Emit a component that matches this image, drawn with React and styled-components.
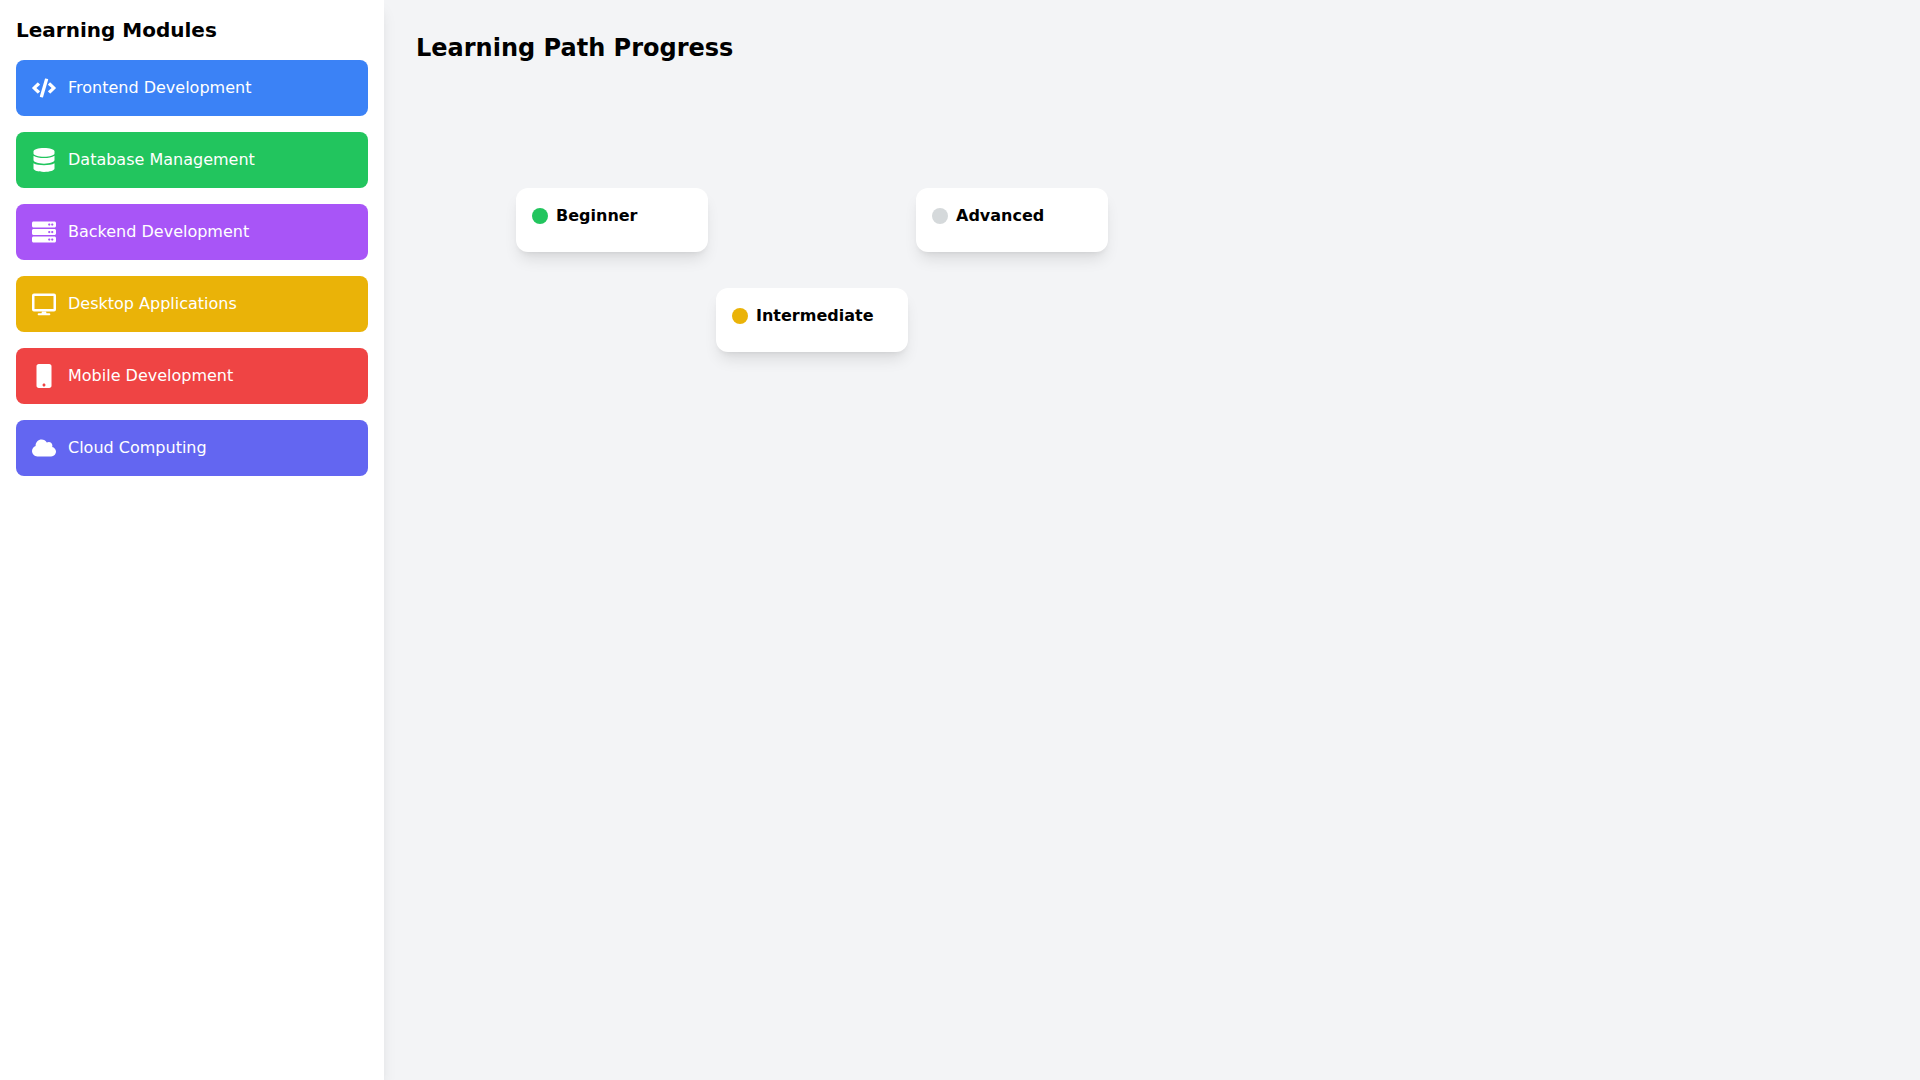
import React from "react";
import styled, { createGlobalStyle } from "styled-components";
import { FaCode, FaServer, FaMobile, FaCloud } from "react-icons/fa";

const Global = createGlobalStyle`
  html, body { margin: 0; padding: 0; height: 100%; }
  * { box-sizing: border-box; }
  body { font-family: "DejaVu Sans", sans-serif; }
`;

const Page = styled.div`
  display: flex;
  height: 100vh;
  overflow: hidden;
  background: #f3f4f6;
`;

const Sidebar = styled.aside`
  width: 384px;
  flex: none;
  padding: 16px;
  background: #fff;
  box-shadow: 0 10px 15px -3px rgba(0,0,0,.1), 0 4px 6px -4px rgba(0,0,0,.1);
  position: relative;
`;

const SidebarTitle = styled.h2`
  margin: 0 0 16px;
  font-size: 20px;
  line-height: 28px;
  font-weight: 700;
  color: #000;
`;

const ModuleList = styled.div`
  display: flex;
  flex-direction: column;
  gap: 16px;
`;

const ModuleCard = styled.div`
  display: flex;
  align-items: center;
  height: 56px;
  padding: 16px;
  border-radius: 8px;
  background: ${(p) => p.$color};
  color: #fff;
  font-size: 16px;
  line-height: 24px;
`;

const IconSlot = styled.span`
  width: 24px;
  height: 24px;
  margin-right: 12px;
  flex: none;
  display: flex;
  align-items: center;
  justify-content: center;
  font-size: 24px;
`;

const Main = styled.main`
  flex: 1;
  padding: 32px;
`;

const Heading = styled.h1`
  margin: 0;
  font-size: 24px;
  line-height: 32px;
  font-weight: 700;
  color: #000;
`;

const Canvas = styled.div`
  position: relative;
  height: 600px;
`;

const Node = styled.div`
  position: absolute;
  left: ${(p) => p.$x}px;
  top: ${(p) => p.$y}px;
  width: 192px;
  height: 64px;
  padding: 16px;
  background: #fff;
  border-radius: 12px;
  box-shadow: 0 10px 15px -3px rgba(0,0,0,.1), 0 4px 6px -4px rgba(0,0,0,.1);
`;

const NodeRow = styled.div`
  display: flex;
  align-items: center;
  gap: 8px;
`;

const Dot = styled.span`
  width: 16px;
  height: 16px;
  border-radius: 50%;
  background: ${(p) => p.$color};
`;

const NodeLabel = styled.span`
  font-size: 16px;
  line-height: 24px;
  font-weight: 700;
  color: #000;
`;

function DatabaseIcon() {
  return (
    <svg width="24" height="24" viewBox="0 0 512 512" fill="currentColor" aria-hidden="true">
      <g transform="translate(32 0)">
        <path d="M448 73v42c0 38-100 70-224 70S0 153 0 115V73C0 33 100 0 224 0s224 33 224 73z" />
        <path d="M448 165v92c0 42-100 78-224 78S0 299 0 257v-92c48 34 136 50 224 50s176-16 224-50z" />
        <path d="M448 324v115c0 40-100 73-224 73S0 479 0 439V324c48 30 136 42 224 42s176-12 224-42z" />
      </g>
    </svg>
  );
}

function DesktopIcon() {
  return (
    <svg width="24" height="24" viewBox="0 0 24 24" fill="currentColor" aria-hidden="true">
      <path
        fillRule="evenodd"
        d="M2 1.4h20a2 2 0 0 1 2 2v14.2a2 2 0 0 1-2 2H2a2 2 0 0 1-2-2V3.4a2 2 0 0 1 2-2zm.5 2.5v13.2h19V3.9z"
      />
      <path d="M10 19.6h4l.5 1.7h2.8a1 1 0 0 1 1 1v.2a.8.8 0 0 1-.8.8H6.5a.8.8 0 0 1-.8-.8v-.2a1 1 0 0 1 1-1h2.8z" />
    </svg>
  );
}

const modules = [
  { name: "Frontend Development", color: "#3b82f6", Icon: FaCode },
  { name: "Database Management", color: "#22c55e", Icon: DatabaseIcon },
  { name: "Backend Development", color: "#a855f7", Icon: FaServer },
  { name: "Desktop Applications", color: "#eab308", Icon: DesktopIcon },
  { name: "Mobile Development", color: "#ef4444", Icon: FaMobile },
  { name: "Cloud Computing", color: "#6366f1", Icon: FaCloud },
];

const nodes = [
  { label: "Beginner", color: "#22c55e", x: 100, y: 124 },
  { label: "Intermediate", color: "#eab308", x: 300, y: 224 },
  { label: "Advanced", color: "#d5d9db", x: 500, y: 124 },
];

export default function App() {
  return (
    <Page>
      <Global />
      <Sidebar>
        <SidebarTitle>Learning Modules</SidebarTitle>
        <ModuleList>
          {modules.map(({ name, color, Icon }) => (
            <ModuleCard key={name} $color={color}>
              <IconSlot><Icon /></IconSlot>
              {name}
            </ModuleCard>
          ))}
        </ModuleList>
      </Sidebar>
      <Main>
        <Heading>Learning Path Progress</Heading>
        <Canvas>
          {nodes.map((n) => (
            <Node key={n.label} $x={n.x} $y={n.y}>
              <NodeRow>
                <Dot $color={n.color} />
                <NodeLabel>{n.label}</NodeLabel>
              </NodeRow>
            </Node>
          ))}
        </Canvas>
      </Main>
    </Page>
  );
}
